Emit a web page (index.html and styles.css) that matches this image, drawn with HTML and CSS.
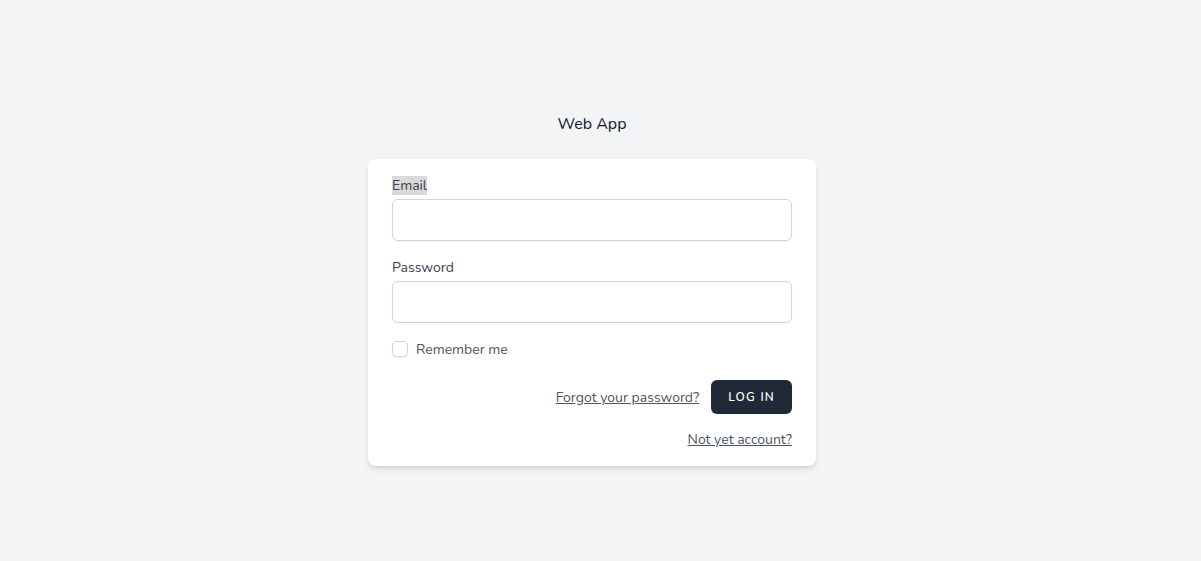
FILE: index.html
```html
<!DOCTYPE html>
<html lang="en">
<head>
<meta charset="utf-8">
<title>Web App</title>
<link rel="stylesheet" href="styles.css">
</head>
<body>
<div class="page">
  <div class="brand">Web App</div>
  <div class="card">
    <form class="form">
      <div class="field">
        <label class="label" for="email"><span class="selected">Email</span></label>
        <input class="input" id="email" type="email">
      </div>
      <div class="field field-gap">
        <label class="label" for="password">Password</label>
        <input class="input" id="password" type="password">
      </div>
      <div class="remember">
        <label class="remember-label" for="remember">
          <span class="checkbox" id="remember"></span>
          <span class="remember-text">Remember me</span>
        </label>
      </div>
      <div class="actions">
        <a class="link link-nudge" href="#">Forgot your password?</a>
        <button class="button" type="button">Log in</button>
      </div>
      <div class="register">
        <a class="link" href="#">Not yet account?</a>
      </div>
    </form>
  </div>
</div>
</body>
</html>
```

FILE: styles.css
```css
* { box-sizing: border-box; }
html, body { margin: 0; padding: 0; }
body {
  background: #f3f4f6;
  font-family: "Nunito", "Lato", "Noto Sans", sans-serif;
  color: #111827;
  line-height: 1.5;
}
.page {
  min-height: 100vh;
  display: flex;
  flex-direction: column;
  align-items: center;
  padding-top: 111px;
  padding-right: 17px;
}
.brand {
  font-size: 16px;
  line-height: 24px;
  padding-top: 1px;
  color: #111827;
}
.card {
  margin-top: 23px;
  width: 448px;
  background: #fff;
  border-radius: 8px;
  padding: 16px 24px;
  box-shadow: 0 4px 6px -1px rgba(0,0,0,0.1), 0 2px 4px -1px rgba(0,0,0,0.06);
}
.form { margin: 0; }
.field { display: flex; flex-direction: column; }
.field-gap { margin-top: 16px; }
.label {
  font-size: 14px;
  line-height: 20px;
  padding-top: 1px;
  font-weight: 400;
  color: #374151;
  display: block;
}
.selected { background: #d9d9d9; }
.input {
  margin-top: 3px;
  width: 100%;
  height: 42px;
  border: 1px solid #d1d5db;
  border-radius: 6px;
  padding: 8px 12px;
  font: inherit;
  box-shadow: 0 1px 2px 0 rgba(0,0,0,0.05);
  background: #fff;
}
.remember {
  margin-top: 16px;
  height: 25px;
}
.remember-label {
  display: inline-flex;
  align-items: center;
  height: 20px;
}
.checkbox {
  width: 16px;
  height: 16px;
  border: 1px solid #d1d5db;
  border-radius: 4px;
  background: #fff;
  box-shadow: 0 1px 2px 0 rgba(0,0,0,0.05);
}
.remember-text {
  margin-left: 8px;
  font-size: 14px;
  line-height: 20px;
  padding-top: 2px;
  color: #4b5563;
}
.actions {
  margin-top: 16px;
  display: flex;
  align-items: center;
  justify-content: flex-end;
}
.link {
  font-size: 14px;
  line-height: 20px;
  color: #4b5563;
  text-decoration: underline;
}
.link-nudge { padding-top: 2px; }
.button {
  margin-left: 12px;
  height: 34px;
  padding: 0 16px;
  background: #1f2937;
  color: #fff;
  border: 1px solid transparent;
  border-radius: 6px;
  font-family: inherit;
  font-size: 12px;
  font-weight: 600;
  letter-spacing: 0.1em;
  text-transform: uppercase;
}
.register {
  margin-top: 13px;
  padding-top: 3px;
  display: flex;
  justify-content: flex-end;
}
```
